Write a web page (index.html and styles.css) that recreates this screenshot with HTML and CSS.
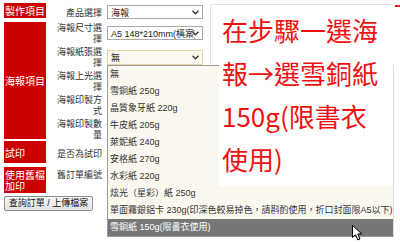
FILE: index.html
```html
<!DOCTYPE html>
<html lang="zh-Hant">
<head>
<meta charset="utf-8">
<link rel="stylesheet" href="styles.css">
</head>
<body>
<div class="page">
  <div class="form">
    <div class="cat c1">製作項目</div>
    <div class="cat c2">海報項目</div>
    <div class="cat c3">試印</div>
    <div class="cat c4">使用舊檔<br>加印</div>

    <div class="lbl r1">產品選擇</div>
    <div class="fld r1"><div class="sel"><span class="val">海報</span><svg class="chev" width="7" height="5" viewBox="0 0 7 5"><polyline points="0.5,0.8 3.5,3.8 6.5,0.8" fill="none" stroke="#333" stroke-width="1.3"/></svg></div></div>

    <div class="lbl r2">海報尺寸選<br>擇</div>
    <div class="fld r2"><div class="sel"><span class="val">A5 148*210mm(橫案)</span><svg class="chev" width="7" height="5" viewBox="0 0 7 5"><polyline points="0.5,0.8 3.5,3.8 6.5,0.8" fill="none" stroke="#333" stroke-width="1.3"/></svg></div></div>

    <div class="lbl r3">海報紙張選<br>擇</div>
    <div class="fld r3"><div class="sel open"><span class="val">無</span><svg class="chev" width="7" height="5" viewBox="0 0 7 5"><polyline points="0.5,0.8 3.5,3.8 6.5,0.8" fill="none" stroke="#333" stroke-width="1.3"/></svg></div></div>

    <div class="lbl r4">海報上光選<br>擇</div>
    <div class="lbl r5">海報印製方<br>式</div>
    <div class="lbl r6">海報印製數<br>量</div>
    <div class="lbl r7">是否為試印</div>
    <div class="lbl r8 top">舊訂單編號</div>

    <div class="panel"></div>
  </div>
  <button class="btn">查詢訂單 / 上傳檔案</button>

  <ul class="menu">
    <li>無</li>
    <li>雪銅紙 250g</li>
    <li>晶質象牙紙 220g</li>
    <li>牛皮紙 205g</li>
    <li>萊妮紙 240g</li>
    <li>安格紙 270g</li>
    <li>水彩紙 220g</li>
    <li>炫光（星彩）紙 250g</li>
    <li>單面霧銀鋁卡 230g(印深色較易掉色，請斟酌使用，折口封面限A5以下)</li>
    <li class="hi">雪銅紙 150g(限書衣使用)</li>
  </ul>

  <div class="note">在步驟一選海<br>報<span class="arrow">→</span>選雪銅紙<br>150g(限書衣<br>使用)</div>
  <div class="mark"></div>

  <svg class="cursor" width="12" height="17" viewBox="0 0 12 17"><path d="M0.5 0.5 L0.5 12.5 L3.5 9.7 L5.8 15 L8 14 L5.8 8.9 L9.8 8.9 Z" fill="#fff" stroke="#000" stroke-width="1" stroke-linejoin="round"/></svg>
</div>
</body>
</html>
```
FILE: styles.css
```css
html, body {
  margin: 0;
  background: #fff;
}
body {
  font-family: "Liberation Sans", "Noto Sans CJK TC", sans-serif;
  font-size: 9px;
  color: #333;
}
.page {
  position: relative;
  width: 400px;
  height: 244px;
  box-sizing: border-box;
  padding: 3px 4px;
  overflow: hidden;
}
.form {
  display: grid;
  grid-template-columns: 44px 59px 96px 7px 183px;
  grid-template-rows: 18px repeat(6, 24px) 28px;
}
.cat {
  grid-column: 1;
  background: #cc0000;
  color: #fff;
  font-family: "Noto Sans CJK TC", sans-serif;
  font-size: 10px;
  line-height: 11px;
  padding-left: 1px;
  margin-right: 2px;
  display: flex;
  flex-direction: column;
  justify-content: center;
}
.c1 { grid-row: 1; margin-bottom: 3px; }
.c2 { grid-row: 2 / 7; margin: 1px 2px 2px 0; }
.c3 { grid-row: 7; margin-bottom: 2px; }
.c4 { grid-row: 8; margin-top: 2px; }
.lbl {
  grid-column: 2;
  text-align: right;
  padding-right: 5px;
  line-height: 11px;
  font-family: "Noto Sans CJK TC", sans-serif;
  color: #333;
  align-self: center;
}
.lbl.top { align-self: start; padding-top: 4px; }
.r1 { grid-row: 1; }
.r2 { grid-row: 2; }
.r3 { grid-row: 3; }
.r4 { grid-row: 4; }
.r5 { grid-row: 5; }
.r6 { grid-row: 6; }
.r7 { grid-row: 7; }
.r8 { grid-row: 8; }
.fld {
  grid-column: 3;
  display: flex;
  align-items: center;
}
.sel {
  position: relative;
  width: 96px;
  height: 14px;
  box-sizing: border-box;
  border: 1px solid #a9a9a9;
  background: #fff;
  display: flex;
  align-items: center;
  padding-left: 3px;
  overflow: hidden;
}
.sel.open {
  height: 15px;
  background: #fcf9f0;
  border-color: #e6d3a8;
}
.val {
  white-space: nowrap;
  overflow: hidden;
  width: 84px;
  color: #222;
}
.chev {
  position: absolute;
  right: 3px;
  top: 4px;
}
.panel {
  grid-column: 5;
  grid-row: 1 / 9;
  margin-top: 1px;
  border: 1px solid #e3e3e3;
  border-bottom: none;
}
.btn {
  display: block;
  margin: 3px 0 0;
  width: 89px;
  height: 15px;
  padding: 0;
  font-family: "Liberation Sans", "Noto Sans CJK TC", sans-serif;
  font-size: 9px;
  line-height: 13px;
  color: #111;
  background: linear-gradient(#f6f6f6, #e4e4e4);
  border: 1px solid #8f8f8f;
  border-radius: 2px;
}
.menu {
  position: absolute;
  left: 107px;
  top: 65px;
  width: 287px;
  margin: 0;
  padding: 0;
  list-style: none;
  background: #fbf8ef;
  border: 1px solid #9a9a9a;
  border-right-color: #e0dccd;
  box-sizing: border-box;
}
.menu li {
  height: 17px;
  line-height: 17px;
  padding-left: 2px;
  white-space: nowrap;
  color: #333;
}
.menu li.hi {
  background: #777;
  color: #fff;
}
.note {
  position: absolute;
  left: 219px;
  top: 5px;
  width: 174px;
  height: 181px;
  box-sizing: border-box;
  padding: 3px 0 0 3px;
  background: #fff;
  color: #ee1111;
  font-family: "Noto Sans CJK TC", sans-serif;
  font-size: 26px;
  line-height: 43px;
  white-space: nowrap;
}
.arrow {
  display: inline-block;
  width: 26px;
  text-align: center;
}
.mark {
  position: absolute;
  left: 395px;
  top: 5px;
  width: 5px;
  height: 2px;
  background: #dd2222;
}
.cursor {
  position: absolute;
  left: 352px;
  top: 225px;
}
```
